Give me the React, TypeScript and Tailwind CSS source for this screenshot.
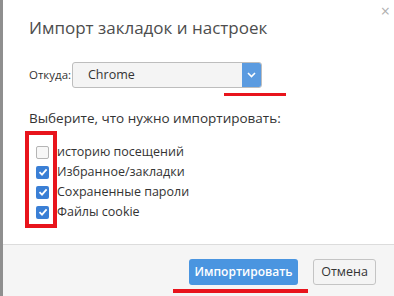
const items = [
  { label: "историю посещений", checked: false },
  { label: "Избранное/закладки", checked: true },
  { label: "Сохраненные пароли", checked: true },
  { label: "Файлы cookie", checked: true },
];

const CheckBox = ({ checked }: { checked: boolean }) =>
  checked ? (
    <span className="flex h-[13px] w-[13px] items-center justify-center rounded-[2px] bg-[#3a7fd5]">
      <svg width="10" height="10" viewBox="0 0 10 10">
        <path d="M1.5 5.2 L4 7.6 L8.6 2.4" fill="none" stroke="#fff" strokeWidth="1.8" />
      </svg>
    </span>
  ) : (
    <span className="block h-[13px] w-[13px] rounded-[2px] border border-[#b5b5b5] bg-[#f7f7f7]" />
  );

export default function App() {
  return (
    <div
      className="flex h-[296px] w-[394px] flex-col overflow-hidden border-l-[3px] border-[#8f8f8f] bg-white text-[#333]"
      style={{ fontFamily: '"Open Sans", "Noto Sans", sans-serif' }}
    >
      <div className="flex-1 pl-[26px]">
        <div className="flex items-start justify-between">
          <h1 className="mt-[14px] text-[17px] leading-[28px] text-[#4d4d4d]">
            Импорт закладок и настроек
          </h1>
          <span className="mr-[4px] mt-[3px] text-[16px] leading-[16px] text-[#b0b0b0]">×</span>
        </div>

        <div className="mt-[20px] flex items-center">
          <span className="w-[43px] whitespace-nowrap text-[11.5px] text-[#333]">Откуда:</span>
          <div className="flex h-[26px] w-[190px] overflow-hidden rounded-[3px] border border-[#bdbdbd] bg-[#f4f4f4]">
            <span className="flex-1 pl-[15px] text-[12.5px] leading-[24px] text-[#333]">Chrome</span>
            <span className="flex w-[19px] items-center justify-center bg-[#5b9be0]">
              <svg width="9" height="6" viewBox="0 0 9 6">
                <path d="M1 1 L4.5 4.5 L8 1" fill="none" stroke="#fff" strokeWidth="1.6" />
              </svg>
            </span>
          </div>
        </div>
        <div className="ml-[195px] mt-[5px] h-[3px] w-[62px] bg-[#e8141c]" />

        <p className="mt-[12px] text-[13.5px] leading-[20px] text-[#333]">
          Выберите, что нужно импортировать:
        </p>

        <div className="relative mt-[14px]">
          <div className="flex flex-col">
            {items.map((it) => (
              <div key={it.label} className="flex h-[20px] items-center">
                <span className="ml-[7px] mr-[8px]">
                  <CheckBox checked={it.checked} />
                </span>
                <span className="text-[12.5px] text-[#333]">{it.label}</span>
              </div>
            ))}
          </div>
          <div className="absolute left-[-4px] top-[-11px] h-[97px] w-[32px] border-[4px] border-[#e8141c]" />
        </div>
      </div>

      <div className="flex h-[52px] flex-col items-end border-t border-[#dcdcdc] bg-[#f5f5f5] pr-[18px] pt-[14px]">
        <div className="flex gap-[15px]">
          <button className="h-[26px] w-[109px] rounded-[3px] bg-[#4a95e0] text-[12px] font-semibold text-white">
            Импортировать
          </button>
          <button className="h-[26px] w-[63px] rounded-[3px] border border-[#c4c4c4] bg-[#f4f4f4] text-[12.5px] text-[#333]">
            Отмена
          </button>
        </div>
        <div className="mr-[68px] mt-[4px] h-[4px] w-[135px] bg-[#e8141c]" />
      </div>
    </div>
  );
}
